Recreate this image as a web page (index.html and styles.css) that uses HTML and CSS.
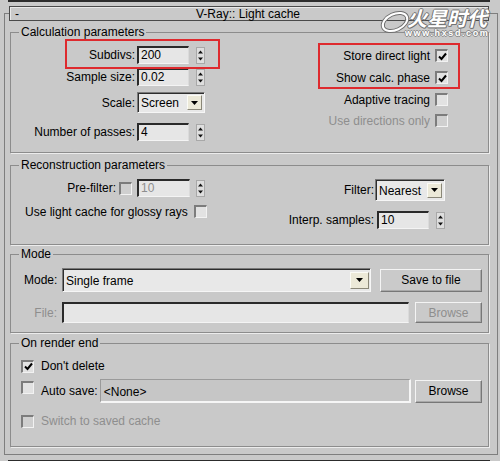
FILE: index.html
```html
<!DOCTYPE html>
<html>
<head>
<meta charset="utf-8">
<link rel="stylesheet" href="styles.css">
</head>
<body>
<div class="prevbar"></div>
<div class="rollout">
  <div class="rhead"><span class="minus">-</span><span class="rtitle">V-Ray:: Light cache</span></div>

  <fieldset class="grp calc">
    <legend>Calculation parameters</legend>
    <div class="calc-body">
      <div class="col-left">
        <div class="frow"><span class="lbl">Subdivs:</span><span class="inp w52">200</span><svg class="spin" width="9" height="17" viewBox="0 0 9 17"><rect x="0.5" y="0.5" width="8" height="16" fill="#dedede" stroke="#a8a8a8"/><path d="M4.5 3.5 L7 6.5 H2 Z M2 10.5 H7 L4.5 13.5 Z" fill="#111"/></svg></div>
        <div class="frow mt4"><span class="lbl">Sample size:</span><span class="inp w52">0.02</span><svg class="spin" width="9" height="17" viewBox="0 0 9 17"><rect x="0.5" y="0.5" width="8" height="16" fill="#dedede" stroke="#a8a8a8"/><path d="M4.5 3.5 L7 6.5 H2 Z M2 10.5 H7 L4.5 13.5 Z" fill="#111"/></svg></div>
        <div class="frow mt6"><span class="lbl">Scale:</span><span class="dd w68"><span class="ddtext">Screen</span><span class="ddbtn"><svg width="7" height="4" viewBox="0 0 7 4"><path d="M0 0 H7 L3.5 4 Z" fill="#000"/></svg></span></span></div>
        <div class="frow mt10"><span class="lbl">Number of passes:</span><span class="inp w52">4</span><svg class="spin" width="9" height="17" viewBox="0 0 9 17"><rect x="0.5" y="0.5" width="8" height="16" fill="#dedede" stroke="#a8a8a8"/><path d="M4.5 3.5 L7 6.5 H2 Z M2 10.5 H7 L4.5 13.5 Z" fill="#111"/></svg></div>
      </div>
      <div class="col-right">
        <div class="crow"><span>Store direct light</span><span class="cb"><svg width="9" height="9" viewBox="0 0 9 9"><path d="M1 4.5 L3.5 7 L8 1.5" fill="none" stroke="#000" stroke-width="2"/></svg></span></div>
        <div class="crow mt9"><span>Show calc. phase</span><span class="cb"><svg width="9" height="9" viewBox="0 0 9 9"><path d="M1 4.5 L3.5 7 L8 1.5" fill="none" stroke="#000" stroke-width="2"/></svg></span></div>
        <div class="crow mt9"><span>Adaptive tracing</span><span class="cb"></span></div>
        <div class="crow mt8 dis"><span>Use directions only</span><span class="cb cbdis"></span></div>
      </div>
      <div class="redbox rb1"></div>
      <div class="redbox rb2"></div>
    </div>
  </fieldset>

  <fieldset class="grp recon">
    <legend>Reconstruction parameters</legend>
    <div class="recon-body">
      <div class="rcol-left">
        <div class="frow"><span class="lbl pf">Pre-filter:</span><span class="cb cb-pf cbdis"></span><span class="inp w53 dis pfin">10</span><svg class="spin" width="9" height="17" viewBox="0 0 9 17"><rect x="0.5" y="0.5" width="8" height="16" fill="#dedede" stroke="#a8a8a8"/><path d="M4.5 3.5 L7 6.5 H2 Z M2 10.5 H7 L4.5 13.5 Z" fill="#111"/></svg></div>
        <div class="crow2 mt8"><span>Use light cache for glossy rays</span><span class="cb cb-gl"></span></div>
      </div>
      <div class="rcol-right">
        <div class="frow"><span>Filter:</span><span class="dd w70 ml1"><span class="ddtext">Nearest</span><span class="ddbtn"><svg width="7" height="4" viewBox="0 0 7 4"><path d="M0 0 H7 L3.5 4 Z" fill="#000"/></svg></span></span></div>
        <div class="frow mt10"><span>Interp. samples:</span><span class="inp w52 ml3">10</span><svg class="spin" width="9" height="17" viewBox="0 0 9 17"><rect x="0.5" y="0.5" width="8" height="16" fill="#dedede" stroke="#a8a8a8"/><path d="M4.5 3.5 L7 6.5 H2 Z M2 10.5 H7 L4.5 13.5 Z" fill="#111"/></svg></div>
      </div>
    </div>
  </fieldset>

  <fieldset class="grp mode">
    <legend>Mode</legend>
    <div class="mode-body">
      <div class="mrow"><span class="mlbl">Mode:</span><span class="dd mdd"><span class="ddtext">Single frame</span><span class="ddbtn big"><svg width="7" height="4" viewBox="0 0 7 4"><path d="M0 0 H7 L3.5 4 Z" fill="#000"/></svg></span></span><span class="btn savebtn">Save to file</span></div>
      <div class="mrow mt10"><span class="mlbl dis">File:</span><span class="inp fileinp"></span><span class="btn browse dis">Browse</span></div>
    </div>
  </fieldset>

  <fieldset class="grp ore">
    <legend>On render end</legend>
    <div class="ore-body">
      <div class="orow"><span class="cb"><svg width="9" height="9" viewBox="0 0 9 9"><path d="M1 4.5 L3.5 7 L8 1.5" fill="none" stroke="#000" stroke-width="2"/></svg></span><span class="olbl">Don't delete</span></div>
      <div class="orow auto mt6"><span class="cb cbtop"></span><span class="olbl">Auto save:</span><span class="field">&lt;None&gt;</span><span class="btn browse">Browse</span></div>
      <div class="orow mt11"><span class="cb cbdis"></span><span class="olbl dis">Switch to saved cache</span></div>
    </div>
  </fieldset>
</div>
<div class="nextbar"></div>

<div class="logo">
  <svg class="swoosh" width="32" height="24" viewBox="0 0 32 24"><ellipse cx="16" cy="12" rx="13" ry="8" transform="rotate(-25 16 12)" fill="none" stroke="#6e6e6e" stroke-width="4"/><ellipse cx="16" cy="12" rx="13" ry="8" transform="rotate(-25 16 12)" fill="none" stroke="#ffffff" stroke-width="2"/></svg>
  <div class="logo-text">
    <span class="logo-cn">火星时代</span>
    <span class="logo-url">www.hxsd.com</span>
  </div>
</div>
</body>
</html>
```
FILE: styles.css
```css
* { box-sizing: border-box; }
html, body { margin: 0; padding: 0; }
body {
  width: 500px;
  height: 461px;
  overflow: hidden;
  position: relative;
  background: #c9c9c9;
  font: 12px/14px "Liberation Sans", Arial, sans-serif;
  color: #000;
}
.prevbar { height: 2px; width: 482px; margin-left: 8px; background: #2c2c2c; }
.nextbar { height: 3px; width: 482px; margin: 5px 0 0 8px; background: #2c2c2c; }

.rollout {
  margin: 11px 0 0 4px;
  width: 494px;
  border: 1px solid #7e7e7e;
  padding: 0 8px 7px 5px;
}
.rhead {
  margin: -8px 0 0 -1px;
  width: 480px;
  height: 15px;
  border: 1px solid #4a4a4a;
  box-shadow: inset 1px 1px 0 #e9e9e9;
  background: #c9c9c9;
  display: flex;
  align-items: center;
  position: relative;
}
.minus { width: 12px; padding-left: 5px; line-height: 12px; }
.rtitle { flex: 1; text-align: center; padding-right: 14px; }

.grp {
  margin: 0;
  padding: 0;
  min-inline-size: 0;
  border: 1px solid #8c8c8c;
  box-shadow: 1px 1px 0 #ececec;
}
.grp legend {
  margin-left: 8px;
  padding: 0 2px;
  line-height: 14px;
  height: 14px;
}
.calc { margin-top: 4px; }
.recon { margin-top: 5px; }
.mode { margin-top: 2px; }
.ore { margin-top: 3px; }

.calc-body {
  position: relative;
  display: flex;
  justify-content: space-between;
  padding: 7px 40px 11px 0;
}
.frow { display: flex; align-items: center; }
.lbl { width: 124px; text-align: right; margin-right: 2px; }
.mt4 { margin-top: 4px; }
.mt6 { margin-top: 6px; }
.mt8 { margin-top: 8px; }
.mt9 { margin-top: 9px; }
.mt10 { margin-top: 10px; }
.mt11 { margin-top: 11px; }
.ml1 { margin-left: 1px; }
.ml3 { margin-left: 3px; }

.inp {
  display: block;
  height: 18px;
  background: #e6e6e6;
  border-top: 2px solid #2a2a2a;
  border-left: 2px solid #2a2a2a;
  border-right: 1px solid #dadada;
  border-bottom: 1px solid #f4f4f4;
  padding-left: 2px;
  line-height: 15px;
}
.w52 { width: 52px; }
.w53 { width: 53px; }
.spin { display: block; margin-left: 7px; }
.pfin { margin-left: 5px; }
.pfin + .spin { margin-left: 6px; }

.dd {
  display: flex;
  align-items: center;
  height: 21px;
  background: #e8e8e8;
  border-top: 1px solid #7a7a7a;
  border-left: 1px solid #7a7a7a;
  border-right: 1px solid #f6f6f6;
  border-bottom: 1px solid #f6f6f6;
  box-shadow: inset 1px 1px 0 #2e2e2e;
  padding: 0 2px 0 3px;
}
.ddtext { flex: 1; padding-top: 1px; }
.ddbtn {
  width: 15px;
  height: 15px;
  background: #ece9d8;
  border-top: 1px solid #fbfbf6;
  border-left: 1px solid #fbfbf6;
  border-right: 1px solid #8a8778;
  border-bottom: 1px solid #8a8778;
  display: flex;
  align-items: center;
  justify-content: center;
}
.ddbtn.big { width: 19px; height: 17px; }
.w68 { width: 68px; }
.w70 { width: 70px; height: 22px; }

.col-right { margin-top: 3px; display: flex; flex-direction: column; align-items: flex-end; }
.crow { display: flex; align-items: center; height: 13px; }
.crow .cb { margin-left: 5px; }
.cb {
  display: flex;
  align-items: center;
  justify-content: center;
  width: 13px;
  height: 13px;
  flex: none;
  background: #e2e2e2;
  border-top: 2px solid #7c7c7c;
  border-left: 2px solid #7c7c7c;
  border-right: 1px solid #f2f2f2;
  border-bottom: 1px solid #f2f2f2;
}
.cbdis { background: #cfcfcf; }
.dis { color: #8e8e8e; }

.redbox {
  position: absolute;
  border: 2px solid #de2a2e;
}
.rb1 { left: 54px; top: 0; width: 155px; height: 30px; }
.rb2 { left: 307px; top: 4px; width: 142px; height: 46px; }

.recon-body {
  display: flex;
  justify-content: space-between;
  padding: 7px 43px 15px 14px;
}
.rcol-left { display: flex; flex-direction: column; align-items: flex-start; }
.pf { width: 91px; margin-right: 0; }
.cb-pf { margin-left: 3px; }
.crow2 { display: flex; align-items: center; height: 13px; }
.cb-gl { margin-left: 6px; }
.rcol-right { display: flex; flex-direction: column; align-items: flex-end; }

.mode-body { padding: 7px 6px 9px 13px; }
.mrow { display: flex; align-items: center; }
.mlbl { width: 33px; text-align: right; margin-right: 5px; }
.mdd { width: 309px; height: 24px; padding-right: 1px; }
.btn {
  display: flex;
  align-items: center;
  justify-content: center;
  background: #cacaca;
  border-top: 1px solid #f4f4f4;
  border-left: 1px solid #f4f4f4;
  border-right: 1px solid #777;
  border-bottom: 1px solid #777;
  box-shadow: inset -1px -1px 0 #a9a9a9;
}
.savebtn { width: 102px; height: 23px; margin-left: 9px; }
.browse { width: 67px; height: 22px; margin-left: 5px; }
.fileinp { width: 347px; height: 21px; }
.mrow .browse { margin-left: 6px; height: 21px; }

.ore-body { padding: 9px 6px 18px 10px; }
.orow { display: flex; align-items: center; }
.olbl { margin-left: 7px; }
.auto { height: 24px; }
.cbtop { align-self: flex-start; margin-top: 2px; }
.field {
  flex: 1;
  align-self: stretch;
  margin-left: 2px;
  padding: 2px 0 0 3px;
  display: flex;
  align-items: center;
  background: #c6c6c6;
  border-top: 1px solid #9a9a9a;
  border-left: 1px solid #9a9a9a;
  border-right: 2px solid #f6f6f6;
  border-bottom: 2px solid #f6f6f6;
}
.auto .browse { margin-left: 4px; height: 23px; }

.logo {
  position: absolute;
  left: 379px;
  top: 8px;
  display: flex;
  align-items: flex-start;
}
.swoosh { display: block; margin-top: 2px; }
.logo-text { display: flex; flex-direction: column; align-items: flex-end; margin-left: -6px; }
.logo-cn {
  display: block;
  font-family: "Noto Sans CJK SC", sans-serif;
  font-weight: 700;
  font-size: 20px;
  line-height: 20px;
  color: #fff;
  letter-spacing: 0;
  transform: skewX(-14deg);
  text-shadow: 1px 0 #737373, -1px 0 #737373, 0 1px #737373, 0 -1px #737373, 1px 1px #737373;
}
.logo-url {
  display: block;
  margin-top: 1px;
  font-family: "Liberation Sans", Arial, sans-serif;
  font-weight: 700;
  font-size: 9px;
  line-height: 9px;
  letter-spacing: 1.6px;
  color: #fff;
  text-shadow: 1px 0 #8a8a8a, -1px 0 #8a8a8a, 0 1px #8a8a8a, 0 -1px #8a8a8a;
}
```
